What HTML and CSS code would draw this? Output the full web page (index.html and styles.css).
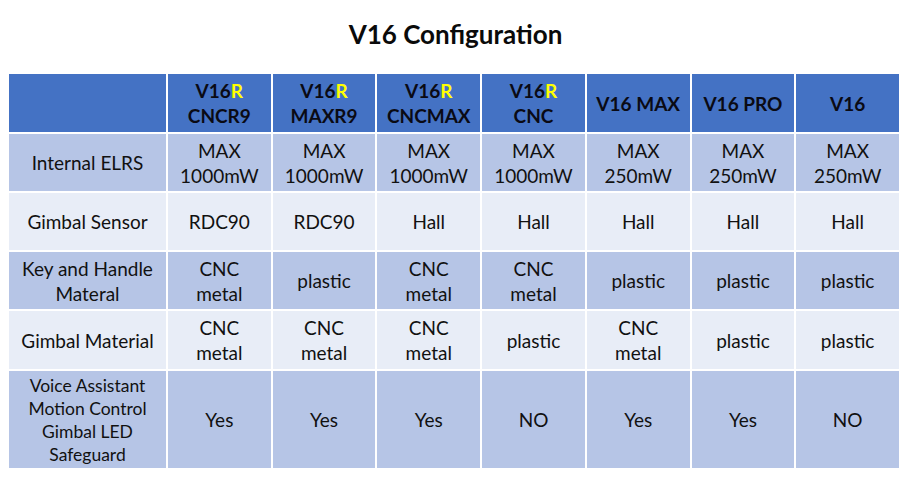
FILE: index.html
```html
<!DOCTYPE html>
<html>
<head>
<meta charset="utf-8">
<link rel="stylesheet" href="styles.css">
</head>
<body>
<div class="page">
  <h1 class="title">V16 Configuration</h1>
  <div class="grid">
    <div class="cell head"><span></span></div>
    <div class="cell head"><span>V16<b class="r">R</b><br>CNCR9</span></div>
    <div class="cell head"><span>V16<b class="r">R</b><br>MAXR9</span></div>
    <div class="cell head"><span>V16<b class="r">R</b><br>CNCMAX</span></div>
    <div class="cell head"><span>V16<b class="r">R</b><br>CNC</span></div>
    <div class="cell head"><span>V16 MAX</span></div>
    <div class="cell head"><span>V16 PRO</span></div>
    <div class="cell head"><span>V16</span></div>

    <div class="cell dark"><span>Internal ELRS</span></div>
    <div class="cell dark"><span>MAX<br>1000mW</span></div>
    <div class="cell dark"><span>MAX<br>1000mW</span></div>
    <div class="cell dark"><span>MAX<br>1000mW</span></div>
    <div class="cell dark"><span>MAX<br>1000mW</span></div>
    <div class="cell dark"><span>MAX<br>250mW</span></div>
    <div class="cell dark"><span>MAX<br>250mW</span></div>
    <div class="cell dark"><span>MAX<br>250mW</span></div>

    <div class="cell light"><span>Gimbal Sensor</span></div>
    <div class="cell light"><span>RDC90</span></div>
    <div class="cell light"><span>RDC90</span></div>
    <div class="cell light"><span>Hall</span></div>
    <div class="cell light"><span>Hall</span></div>
    <div class="cell light"><span>Hall</span></div>
    <div class="cell light"><span>Hall</span></div>
    <div class="cell light"><span>Hall</span></div>

    <div class="cell dark"><span>Key and Handle<br>Materal</span></div>
    <div class="cell dark"><span>CNC<br>metal</span></div>
    <div class="cell dark"><span>plastic</span></div>
    <div class="cell dark"><span>CNC<br>metal</span></div>
    <div class="cell dark"><span>CNC<br>metal</span></div>
    <div class="cell dark"><span>plastic</span></div>
    <div class="cell dark"><span>plastic</span></div>
    <div class="cell dark"><span>plastic</span></div>

    <div class="cell light"><span>Gimbal Material</span></div>
    <div class="cell light"><span>CNC<br>metal</span></div>
    <div class="cell light"><span>CNC<br>metal</span></div>
    <div class="cell light"><span>CNC<br>metal</span></div>
    <div class="cell light"><span>plastic</span></div>
    <div class="cell light"><span>CNC<br>metal</span></div>
    <div class="cell light"><span>plastic</span></div>
    <div class="cell light"><span>plastic</span></div>

    <div class="cell dark small"><span>Voice Assistant<br>Motion Control<br>Gimbal LED<br>Safeguard</span></div>
    <div class="cell dark"><span>Yes</span></div>
    <div class="cell dark"><span>Yes</span></div>
    <div class="cell dark"><span>Yes</span></div>
    <div class="cell dark"><span>NO</span></div>
    <div class="cell dark"><span>Yes</span></div>
    <div class="cell dark"><span>Yes</span></div>
    <div class="cell dark"><span>NO</span></div>
  </div>
</div>
</body>
</html>
```

FILE: styles.css
```css
html, body {
  margin: 0;
  padding: 0;
  background: #ffffff;
}

.page {
  width: 920px;
  height: 495px;
  font-family: Lato, "Open Sans", "Liberation Sans", sans-serif;
  color: #111111;
}

.title {
  margin: 0;
  height: 74px;
  display: flex;
  align-items: center;
  justify-content: center;
  font-size: 26px;
  font-weight: 700;
  padding: 0 9px 6px 0;
  box-sizing: border-box;
  color: #0a0a0a;
}

.grid {
  margin-left: 9px;
  width: 890px;
  display: grid;
  grid-template-columns: 157px repeat(7, minmax(0, 1fr));
  grid-template-rows: 58px 57px 57px 57px 58px 97px;
  gap: 2px;
  background: #ffffff;
}

.cell {
  display: flex;
  align-items: center;
  justify-content: center;
  text-align: center;
  font-size: 19px;
  line-height: 25px;
}

.head {
  background: #4472c4;
  font-weight: 700;
  color: #0a0a14;
}

.r {
  color: #ffff00;
  font-weight: 700;
}

.dark {
  background: #b6c5e6;
}

.light {
  background: #e8edf7;
}

.small {
  line-height: 23px;
  font-size: 17.5px;
}
```
